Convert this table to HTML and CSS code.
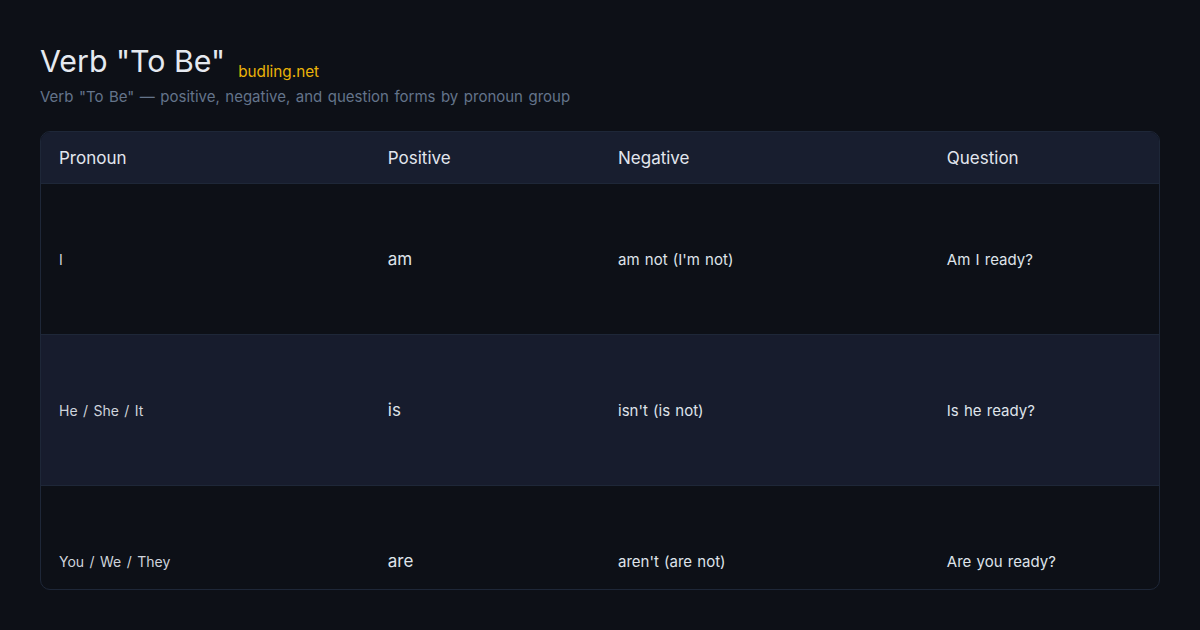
FILE: index.html
```html
<!DOCTYPE html>
<html lang="en">
<head>
    <meta charset="UTF-8">
    <meta name="viewport" content="width=device-width, initial-scale=1.0">
    <title>Verb "To Be"</title>
    <link rel="stylesheet" href="styles.css">
</head>
<body>
    <div class="page">
        <div class="header">
            <div class="title-row">
                <h1 class="title">Verb "To Be"</h1>
                <span class="brand">budling.net</span>
            </div>
            <div class="subtitle">Verb "To Be" — positive, negative, and question forms by pronoun group</div>
        </div>
        <div class="table">
            <div class="row head">
                <div class="cell">Pronoun</div>
                <div class="cell">Positive</div>
                <div class="cell">Negative</div>
                <div class="cell">Question</div>
            </div>
            <div class="row">
                <div class="cell pronoun">I</div>
                <div class="cell verb">am</div>
                <div class="cell">am not (I'm not)</div>
                <div class="cell">Am I ready?</div>
            </div>
            <div class="row alt">
                <div class="cell pronoun">He / She / It</div>
                <div class="cell verb">is</div>
                <div class="cell">isn't (is not)</div>
                <div class="cell">Is he ready?</div>
            </div>
            <div class="row">
                <div class="cell pronoun">You / We / They</div>
                <div class="cell verb">are</div>
                <div class="cell">aren't (are not)</div>
                <div class="cell">Are you ready?</div>
            </div>
        </div>
    </div>
</body>
</html>
```

FILE: styles.css
```css
body, html {
    margin: 0;
    padding: 0;
    height: 100%;
    font-family: Inter, "Noto Sans", sans-serif;
    background-color: #0d1017;
    overflow: hidden;
}
.page {
    box-sizing: border-box;
    height: 630px;
    padding: 40px;
    display: flex;
    flex-direction: column;
}
.title-row {
    display: flex;
    align-items: flex-end;
    gap: 13px;
}
.title {
    margin: 0;
    font-size: 30.3px;
    font-weight: 400;
    line-height: 43px;
    color: #e5e9f0;
}
.brand {
    font-size: 15.3px;
    line-height: 22px;
    color: #eab308;
}
.subtitle {
    margin-top: 4px;
    font-size: 15px;
    word-spacing: 1.3px;
    color: #64748b;
}
.table {
    margin-top: 25px;
    flex: 1;
    min-height: 0;
    overflow: hidden;
    border: 1px solid #1e2738;
    border-radius: 10px;
}
.row {
    box-sizing: border-box;
    display: grid;
    grid-template-columns: 10fr 7fr 10fr 7fr;
    align-items: center;
    height: 151px;
    border-bottom: 1px solid #1e2738;
    color: #dfe3ea;
    font-size: 15px;
    word-spacing: 1px;
}
.row.head {
    height: 52px;
    background-color: #181e2f;
    font-size: 17px;
    color: #e2e6ee;
}
.row.alt {
    background-color: #171c2d;
}
.cell {
    padding: 0 18px;
}
.pronoun {
    font-size: 14px;
    word-spacing: 1.5px;
    color: #cfd4dc;
}
.verb {
    font-size: 17px;
}
```
